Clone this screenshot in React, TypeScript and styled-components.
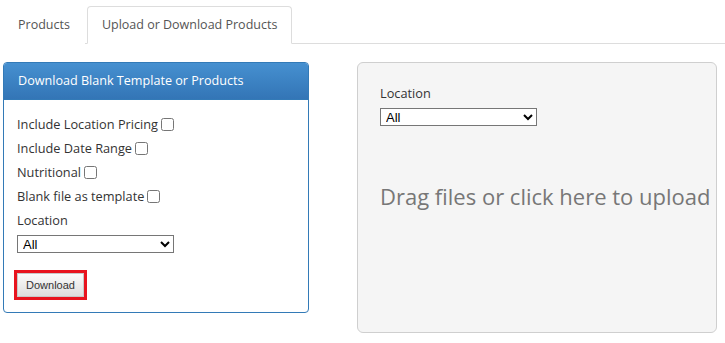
import React from "react";
import styled, { createGlobalStyle } from "styled-components";

const Global = createGlobalStyle`
  html, body { margin: 0; padding: 0; background: #fff; }
  body { font-family: "Open Sans", "Liberation Sans", sans-serif; font-size: 13px; color: #333; }
  * { box-sizing: border-box; }
`;

const Page = styled.div`
  padding: 6px 0 0 3px;
  width: 725px;
`;

const TabBar = styled.ul`
  display: flex;
  list-style: none;
  margin: 0;
  padding: 0;
  border-bottom: 1px solid #ddd;
`;

const Tab = styled.li<{ $active?: boolean }>`
  margin-right: 2px;
  margin-bottom: -1px;
  padding: 9px 14px;
  line-height: 18px;
  font-size: 12.5px;
  color: #555;
  border: 1px solid ${(p) => (p.$active ? "#ddd" : "transparent")};
  border-bottom-color: ${(p) => (p.$active ? "#fff" : "transparent")};
  border-radius: 4px 4px 0 0;
  background: #fff;
`;

const Columns = styled.div`
  display: flex;
  align-items: flex-start;
  gap: 48px;
  margin-top: 18px;
`;

const Panel = styled.div`
  width: 306px;
  border: 1px solid #337ab7;
  border-radius: 4px;
  overflow: hidden;
`;

const PanelHeading = styled.div`
  padding: 9px 14px;
  line-height: 18px;
  color: #fff;
  font-size: 12.6px;
  background: linear-gradient(to bottom, #4690d0 0%, #3375b6 100%);
  border-bottom: 1px solid #337ab7;
`;

const PanelBody = styled.div`
  padding: 15px 13px 15px 13px;
`;

const Row = styled.label`
  display: flex;
  align-items: center;
  line-height: 18px;
  height: 18px;
  margin-bottom: 6px;
  font-size: 12.75px;
  color: #333;
`;

const Check = styled.input`
  width: 13px;
  height: 13px;
  margin: 0 0 0 3px;
`;

const FieldLabel = styled.div`
  line-height: 18px;
  font-size: 12.75px;
  color: #333;
  margin-bottom: 6px;
`;

const Select = styled.select`
  display: block;
  width: 157px;
  height: 18px;
  padding: 0 0 0 1px;
  font-family: "Liberation Sans", Arial, sans-serif;
  font-size: 13px;
  color: #000;
  border: 1px solid #767676;
  border-radius: 0;
  background: #fff;
`;

const Button = styled.button`
  display: block;
  margin-top: 20px;
  width: 67px;
  height: 24px;
  padding: 0;
  font-family: "Liberation Sans", Arial, sans-serif;
  font-size: 11px;
  color: #333;
  background: linear-gradient(to bottom, #fbfbfb 0%, #dedede 100%);
  border: 1px solid #c8c8c8;
  border-radius: 0;
  outline: 3px solid #e8141f;
  outline-offset: 0;
`;

const DropZone = styled.div`
  width: 360px;
  height: 271px;
  padding: 21px 0 0 22px;
  background: #f5f5f5;
  border: 1px solid #cfcfcf;
  border-radius: 6px;
`;

const DropText = styled.div`
  margin-top: 55px;
  font-size: 22px;
  line-height: 30px;
  color: #777;
  white-space: nowrap;
`;

export default function App() {
  return (
    <Page>
      <Global />
      <TabBar>
        <Tab>Products</Tab>
        <Tab $active>Upload or Download Products</Tab>
      </TabBar>
      <Columns>
        <Panel>
          <PanelHeading>Download Blank Template or Products</PanelHeading>
          <PanelBody>
            <Row>
              Include Location Pricing
              <Check type="checkbox" />
            </Row>
            <Row>
              Include Date Range
              <Check type="checkbox" />
            </Row>
            <Row>
              Nutritional
              <Check type="checkbox" />
            </Row>
            <Row>
              Blank file as template
              <Check type="checkbox" />
            </Row>
            <FieldLabel>Location</FieldLabel>
            <Select defaultValue="All">
              <option>All</option>
            </Select>
            <Button>Download</Button>
          </PanelBody>
        </Panel>
        <DropZone>
          <FieldLabel>Location</FieldLabel>
          <Select defaultValue="All">
            <option>All</option>
          </Select>
          <DropText>Drag files or click here to upload</DropText>
        </DropZone>
      </Columns>
    </Page>
  );
}
